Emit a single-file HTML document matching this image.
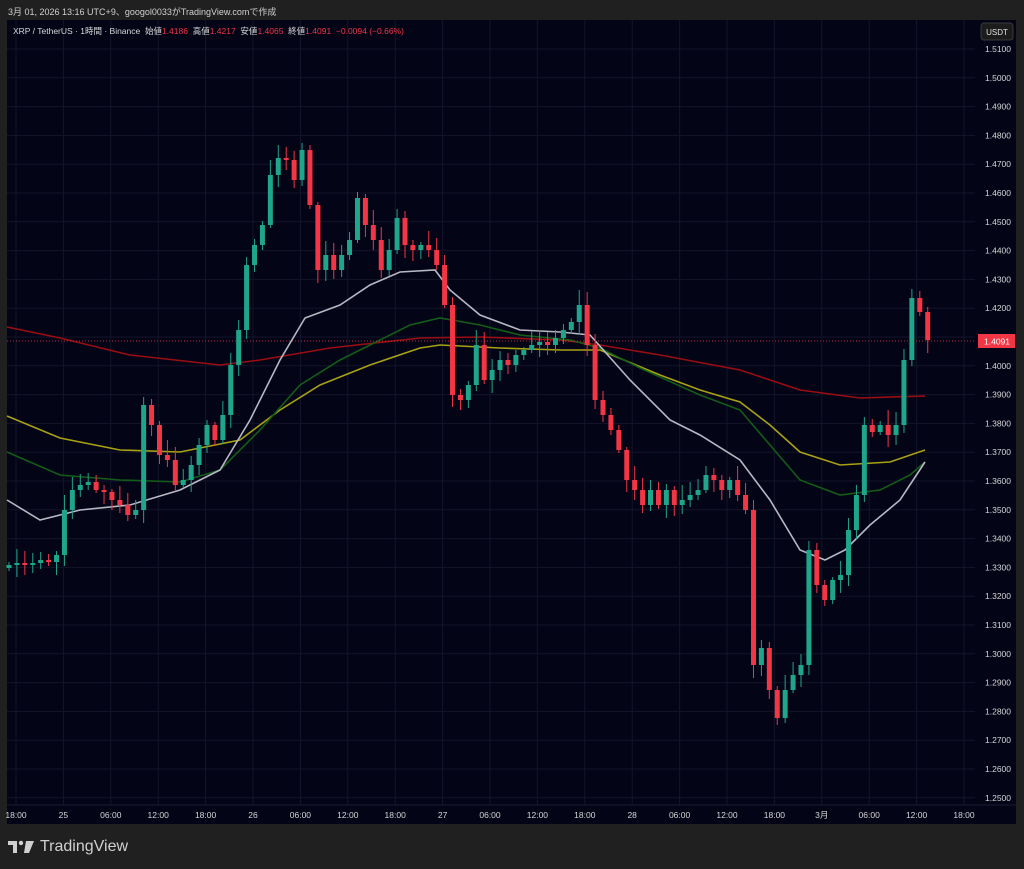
<!DOCTYPE html>
<html><head><meta charset="utf-8"><style>
html,body{margin:0;padding:0;background:#202020;width:1024px;height:869px;overflow:hidden;font-family:"Liberation Sans","Noto Sans CJK JP",sans-serif}
#top{position:absolute;left:8px;top:5px;font-size:9px;color:#d0d0d0}
#chart{position:absolute;left:7px;top:20px;width:1009px;height:804px;background:#040417}
#hdr{position:absolute;left:13px;top:25px;font-size:8.5px;color:#d8d8d8;white-space:nowrap}
#hdr .r{color:#f23645}
#logo{position:absolute;left:8px;top:838px;color:#d0d0d0;font-size:17px;font-weight:bold;display:flex;align-items:center;gap:6px}
svg{position:absolute;left:0;top:0}
</style></head><body>
<div id="top">3月 01, 2026 13:16 UTC+9、googol0033がTradingView.comで作成</div>
<div id="chart"></div>
<svg id="s" width="1024" height="869"></svg>
<div id="hdr">XRP / TetherUS · 1時間 · Binance&nbsp; 始値<span class="r">1.4186</span>&nbsp; 高値<span class="r">1.4217</span>&nbsp; 安値<span class="r">1.4065</span>&nbsp; 終値<span class="r">1.4091&nbsp; −0.0094 (−0.66%)</span></div>
<div id="logo"><svg width="26" height="14" viewBox="0 0 26 14" style="position:static"><path d="M0 1h9v12H5V5H0z" fill="#d0d0d0"/><circle cx="13" cy="3" r="2.2" fill="#d0d0d0"/><path d="M18 1h8l-5 12h-5z" fill="#d0d0d0"/></svg><span style="font-weight:normal;font-size:16px">TradingView</span></div>
<script>
(function(){
var s=document.getElementById('s'),h='';
for(var i=0;i<=26;i++){var y=49+i*28.8;h+='<line x1="7" x2="975" y1="'+y+'" y2="'+y+'" stroke="#14152a" stroke-width="1"/>';
h+='<text x="985" y="'+(y+3)+'" fill="#d6d6d6" font-size="8.5">'+(1.51-i*0.01).toFixed(4)+'</text>';}
var tl=['18:00','25','06:00','12:00','18:00','26','06:00','12:00','18:00','27','06:00','12:00','18:00','28','06:00','12:00','18:00','3月','06:00','12:00','18:00'];
for(var i=0;i<tl.length;i++){var x=16+i*47.4;h+='<line x1="'+x+'" x2="'+x+'" y1="20" y2="805" stroke="#14152a"/>';h+='<text x="'+x+'" y="818" fill="#d6d6d6" font-size="8.5" text-anchor="middle">'+tl[i]+'</text>';}
h+='<line x1="7" x2="1016" y1="805" y2="805" stroke="#1c1d30"/>';
function pl(pts,c){h+='<polyline fill="none" stroke="'+c+'" stroke-width="1.6" points="'+pts+'"/>';}
pl('7,327 60,338 130,355 220,365 260,360 330,348 420,338 480,337 560,340 600,345 660,355 740,370 800,390 860,398 925,396','#9a0d12');
pl('7,416 60,438 120,450 180,452 240,440 280,410 320,385 370,365 420,348 440,345 500,348 560,350 600,350 660,375 700,390 740,402 770,425 800,452 840,465 890,462 925,450','#a8a213');
pl('7,452 60,475 120,480 180,482 220,470 260,430 300,385 340,360 380,340 410,325 440,318 480,325 520,335 570,340 600,348 640,368 700,395 740,410 770,445 800,480 840,495 880,490 910,475 925,462','#125d17');
pl('7,500 40,520 80,510 130,505 180,490 220,470 250,420 280,360 305,318 340,305 370,285 400,272 435,270 450,290 480,315 520,330 560,332 590,335 630,380 670,420 700,435 740,460 770,500 800,550 825,560 845,550 870,525 900,500 925,462','#b8b8c4');
h+='<line x1="7" x2="975" y1="341" y2="341" stroke="#f23645" stroke-dasharray="1 2" stroke-width="0.8"/>';
var c=[565,563,565,563,560,562,555,510,490,485,482,490,492,500,505,515,510,405,425,455,460,485,480,465,445,425,440,415,365,330,265,245,225,175,158,160,180,150,205,270,255,270,255,240,198,225,240,270,250,218,245,250,245,250,265,305,395,400,385,345,380,370,360,365,355,350,345,342,345,338,330,322,305,345,400,415,430,450,480,490,505,490,505,490,505,500,495,490,475,480,490,480,495,510,665,648,690,718,690,675,665,550,585,600,580,575,530,495,425,432,425,435,425,360,298,312,340];
var o=568;
for(var i=0;i<c.length;i++){var x=9+7.92*i,cl=c[i],up=cl<o,col=up?'#1ea58a':'#f23645';
var tp=Math.min(o,cl),bt=Math.max(o,cl);if(bt-tp<1.5)bt=tp+1.5;
var w1=3+((i*37)%13),w2=3+((i*53)%11);
h+='<line x1="'+x+'" x2="'+x+'" y1="'+(tp-w1)+'" y2="'+(bt+w2)+'" stroke="'+col+'" stroke-width="1"/>';
h+='<rect x="'+(x-2.5)+'" y="'+tp+'" width="5" height="'+(bt-tp)+'" fill="'+col+'"/>';o=cl;}
h+='<rect x="978" y="334" width="37" height="14" fill="#f23645"/><text x="984" y="344.5" fill="#fff" font-size="8.5">1.4091</text>';
h+='<rect x="981" y="23" width="32" height="17" rx="3" fill="#1c1c1c" stroke="#3a3a3a"/><text x="997" y="35" fill="#e0e0e0" font-size="8" text-anchor="middle">USDT</text>';
s.innerHTML=h;
})();
</script>
</body></html>
